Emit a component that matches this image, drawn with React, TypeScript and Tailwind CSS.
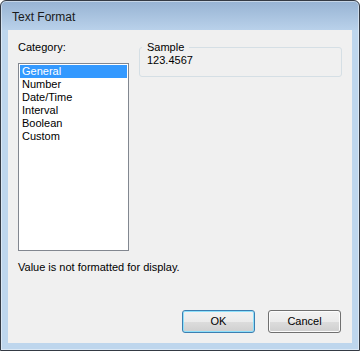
import React from 'react';

const categories = ['General', 'Number', 'Date/Time', 'Interval', 'Boolean', 'Custom'];

const DialogButton: React.FC<{ label: string; isDefault?: boolean }> = ({ label, isDefault }) => (
  <button
    className={`w-[73px] h-[23px] rounded-[3px] border text-[11px] text-black bg-[linear-gradient(to_bottom,#f2f2f2_0%,#ebebeb_50%,#dddddd_50%,#cfcfcf_100%)] ${
      isDefault ? 'border-[#3c7fb1] shadow-[inset_0_0_0_1px_#8ee0fb]' : 'border-[#707070] shadow-[inset_0_0_0_1px_#fcfcfc]'
    }`}
  >
    {label}
  </button>
);

export default function App() {
  const selected = 'General';

  return (
    <div className="w-[360px] h-[351px] bg-white font-['Liberation_Sans',Arial,sans-serif]">
      <div className="w-full h-full flex flex-col rounded-t-[6px] border border-[#343a44] bg-[linear-gradient(to_bottom,#97b3d3_0px,#b9d1ea_29px,#bed6ed_29px,#bed6ed_100%)] shadow-[inset_0_0_0_1px_rgba(255,255,255,0.45)]">
        {/* title bar */}
        <div className="h-[29px] flex items-center px-[11px] pt-[2px]">
          <span className="text-[12px] text-[#1a1a1a]">Text Format</span>
        </div>

        {/* client area */}
        <div className="flex-1 mx-[7px] mb-[7px] bg-[#f0f0f0] flex flex-col px-[10px] pt-[11px] pb-[10px] text-[11px] leading-[13px] text-black">
          <div className="flex gap-[10px] items-start">
            <div className="flex flex-col">
              <span>Category:</span>
              <div className="mt-[9px] w-[111px] h-[188px] border border-[#828790] bg-white p-[1px]">
                {categories.map(c => (
                  <div
                    key={c}
                    className={`h-[13px] pl-[2px] ${c === selected ? 'bg-[#3399ff] text-white' : ''}`}
                  >
                    {c}
                  </div>
                ))}
              </div>
            </div>

            <fieldset className="w-[203px] border border-[#d5dfe5] rounded-[3px] pb-[9px]">
              <legend className="ml-[2px] px-[5px]">Sample</legend>
              <div className="pl-[7px]">123.4567</div>
            </fieldset>
          </div>

          <p className="mt-[10px]">Value is not formatted for display.</p>

          <div className="mt-auto flex justify-end gap-[13px] pr-[1px]">
            <DialogButton label="OK" isDefault />
            <DialogButton label="Cancel" />
          </div>
        </div>
      </div>
    </div>
  );
}
